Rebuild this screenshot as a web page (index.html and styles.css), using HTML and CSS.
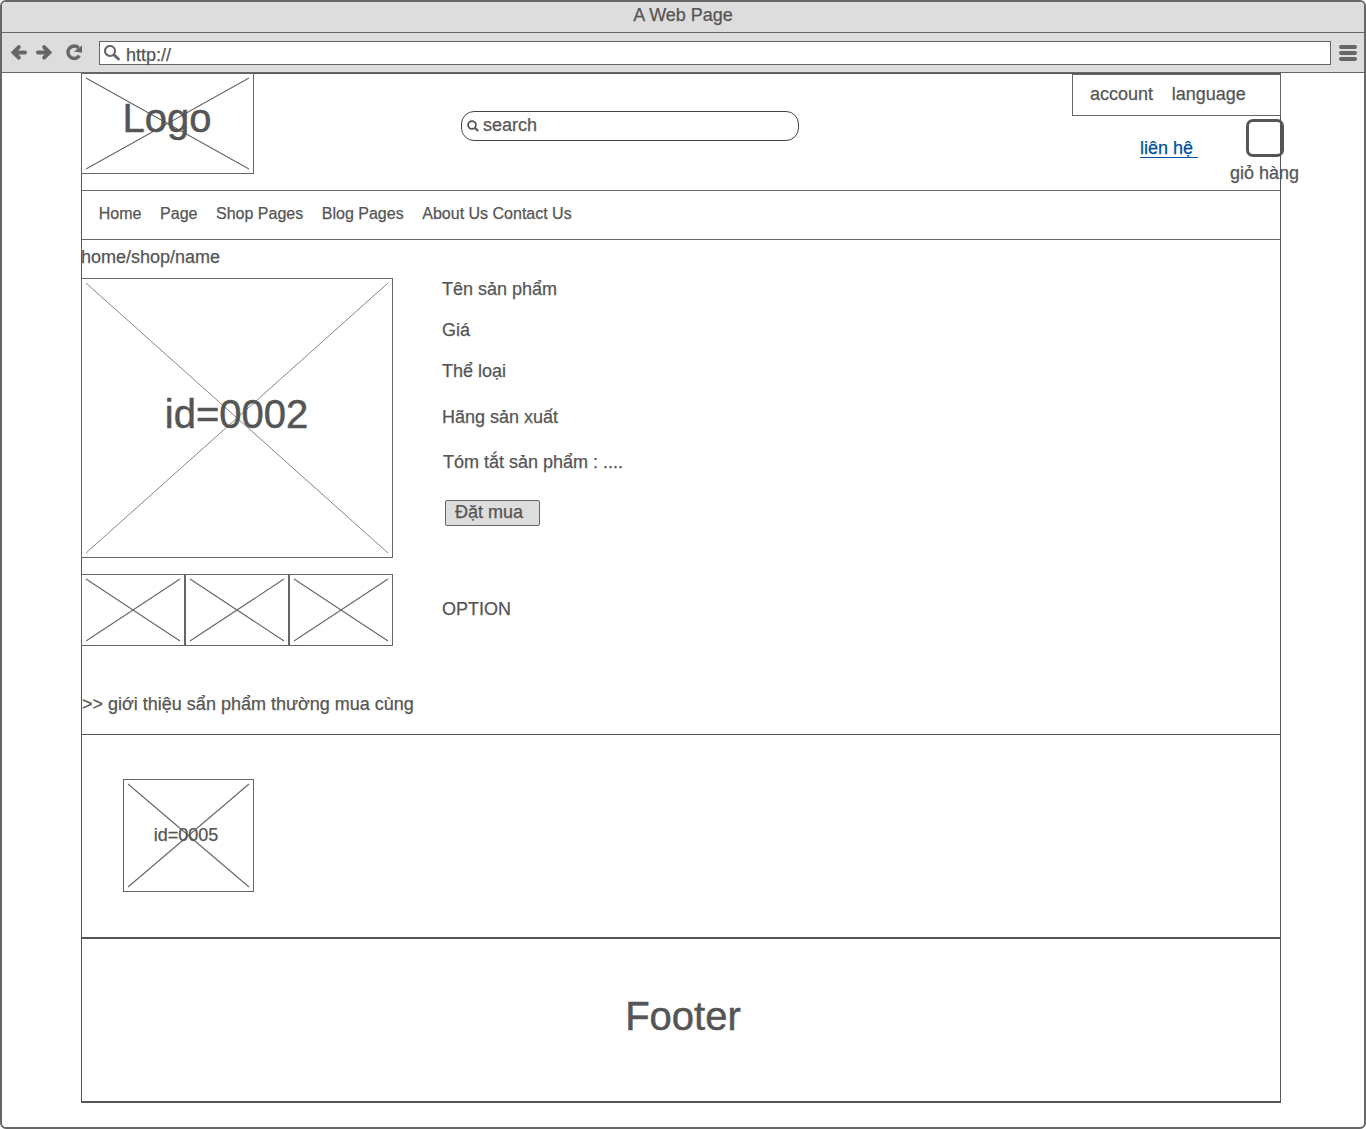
FILE: index.html
```html
<!DOCTYPE html>
<html lang="vi">
<head>
<meta charset="utf-8">
<title>A Web Page</title>
<link rel="stylesheet" href="styles.css">
</head>
<body>
<div class="window">
  <div class="titlebar">A Web Page</div>
  <div class="toolbar">
    <svg class="nav-icons" width="76" height="20" viewBox="0 0 76 20">
      <g fill="none" stroke="#666" stroke-width="4" stroke-linejoin="miter">
        <path d="M9.8 4.2 4.6 9.4l5.2 5.2M5 9.4h11" stroke-linecap="round"/>
        <path d="M35.2 4.2l5.2 5.2-5.2 5.2M40 9.4H29" stroke-linecap="round"/>
        <path d="M69.6 4.9A6.2 6.2 0 1 0 70.4 12.6" stroke-width="3.4"/>
      </g>
      <path d="M73 2.4v7.4l-8-1.4z" fill="#666"/>
    </svg>
    <div class="address">
      <svg width="18" height="18" viewBox="0 0 18 18" fill="none" stroke="#666">
        <circle cx="6" cy="6" r="5" stroke-width="2.1"/>
        <path d="M10.2 10.2l4.2 3.8" stroke-width="3" stroke-linecap="round"/>
      </svg>
      <span>http://</span>
    </div>
    <div class="menu"><i></i><i></i><i></i></div>
  </div>

  <div class="sheet">
    <header class="header">
      <div class="picture logo">
        <svg><line x1="0" y1="0" x2="100%" y2="100%"/><line x1="100%" y1="0" x2="0" y2="100%"/></svg>
        <span class="big">Logo</span>
      </div>
      <div class="search">
        <svg width="12" height="12" viewBox="0 0 12 12" fill="none" stroke="#555">
          <circle cx="5" cy="5" r="3.9" stroke-width="1.8"/>
          <path d="M8 8l3.2 3" stroke-width="2.2"/>
        </svg>
        <span>search</span>
      </div>
      <div class="tools">
        <div class="account"><span>account</span><span>language</span></div>
        <div class="tools-row">
          <a class="contact">liên hệ</a>
          <div class="cart"><i class="cart-box"></i><span>giỏ hàng</span></div>
        </div>
      </div>
    </header>

    <nav class="nav">
      <span>Home</span><span>Page</span><span>Shop Pages</span><span>Blog Pages</span><span>About Us Contact Us</span>
    </nav>

    <main class="product">
      <div class="crumbs">home/shop/name</div>
      <div class="columns">
        <div class="gallery">
          <div class="picture main-picture">
            <svg><line x1="0" y1="0" x2="100%" y2="100%"/><line x1="100%" y1="0" x2="0" y2="100%"/></svg>
            <span class="big">id=0002</span>
          </div>
          <div class="thumbs">
            <div class="picture"><svg><line x1="0" y1="0" x2="100%" y2="100%"/><line x1="100%" y1="0" x2="0" y2="100%"/></svg></div>
            <div class="picture"><svg><line x1="0" y1="0" x2="100%" y2="100%"/><line x1="100%" y1="0" x2="0" y2="100%"/></svg></div>
            <div class="picture"><svg><line x1="0" y1="0" x2="100%" y2="100%"/><line x1="100%" y1="0" x2="0" y2="100%"/></svg></div>
          </div>
        </div>
        <div class="details">
          <div class="name">Tên sản phẩm</div>
          <div class="price">Giá</div>
          <div class="category">Thể loại</div>
          <div class="maker">Hãng sản xuất</div>
          <div class="summary">Tóm tắt sản phẩm : ....</div>
          <div class="order">Đặt mua</div>
          <div>OPTION</div>
        </div>
      </div>
      <div class="related-title">&gt;&gt; giới thiệu sẩn phẩm thường mua cùng</div>
    </main>

    <section class="related">
      <div class="picture related-picture">
        <svg><line x1="0" y1="0" x2="100%" y2="100%"/><line x1="100%" y1="0" x2="0" y2="100%"/></svg>
        <span>id=0005</span>
      </div>
    </section>

    <footer class="footer big">Footer</footer>
  </div>
</div>
</body>
</html>
```
FILE: styles.css
```css
* { box-sizing: border-box; }

body {
  margin: 0;
  background: #fff;
  color: #555;
  font: 18px/20px "Liberation Sans", Arial, sans-serif;
  -webkit-text-stroke: 0.25px currentColor;
}

svg { display: block; }

.big { font-size: 40px; line-height: 46px; -webkit-text-stroke-width: 0.5px; }

.window {
  height: 1129px;
  border: 2px solid #666;
  border-radius: 6px;
  overflow: hidden;
}

/* browser frame */
.titlebar {
  height: 31px;
  padding-top: 3px;
  border-bottom: 1px solid #666;
  background: #ddd;
  text-align: center;
}

.toolbar {
  display: flex;
  height: 40px;
  padding: 8px 7px 0 7px;
  border-bottom: 1px solid #666;
  background: #ddd;
}

.nav-icons { margin-top: 2px; }

.address {
  display: flex;
  gap: 4px;
  width: 1232px;
  height: 24px;
  margin-left: 14px;
  padding: 3px 0 0 4px;
  border: 1px solid #666;
  background: #fff;
}

.menu {
  display: flex;
  flex-direction: column;
  gap: 2px;
  width: 18px;
  margin: 4px 0 0 7.5px;
}

.menu i { height: 4px; border-radius: 2px; background: #666; }

/* page */
.sheet {
  width: 1200px;
  height: 1030px;
  margin-left: 79px;
  border: 1px solid #555;
  border-bottom-width: 2px;
}

.picture {
  display: grid;
  grid-template-rows: minmax(0, 1fr);
  justify-items: center;
  align-items: start;
  padding: 4px;
  border: 1px solid #666;
}

.picture > * { grid-area: 1 / 1; }

.picture svg {
  width: 100%;
  height: 100%;
  overflow: visible;
  stroke: #666;
  stroke-width: 1.1;
}

.header {
  display: flex;
  height: 117px;
  border-bottom: 1px solid #666;
}

.logo {
  width: 173px;
  height: 101px;
  margin: -1px 0 0 -1px;
}

.logo span { margin: 17px 1px 0 0; }

.search {
  display: flex;
  gap: 4px;
  width: 338px;
  height: 30px;
  margin: 37px 0 0 207px;
  padding: 3px 0 0 5px;
  border: 1px solid #444;
  border-radius: 13px;
}

.search svg { margin-top: 5px; }

.tools { width: 209px; margin: 0 -1px 0 273px; }

.account {
  display: flex;
  gap: 18.6px;
  height: 42px;
  padding: 9px 0 0 17px;
  border: 1px solid #666;
}

.tools-row { display: flex; padding-left: 68px; }

.contact {
  flex: none;
  width: 58px;
  height: 20px;
  margin-top: 22px;
  border-bottom: 1px solid #00509d;
  color: #00509d;
}

.cart {
  display: flex;
  flex: none;
  flex-direction: column;
  align-items: center;
  gap: 6px;
  width: 70px;
  margin: 3px 0 0 32px;
  white-space: nowrap;
}

.cart-box {
  width: 38px;
  height: 38px;
  border: 3px solid #555;
  border-radius: 7px;
}

.cart span { margin-right: 1px; }

.nav {
  display: flex;
  gap: 18.6px;
  height: 49px;
  padding: 13px 0 0 16.8px;
  border-bottom: 1px solid #666;
  font-size: 16px;
}

.product { height: 495px; padding-top: 7px; border-bottom: 1px solid #555; }

.crumbs { margin: 0 0 11px -1px; }

.columns { display: flex; gap: 49px; height: 368px; }

.gallery { width: 312px; margin-left: -1px; }

.main-picture { height: 280px; }
.main-picture svg { stroke-width: 0.8; }
.main-picture span { margin: 108px 1px 0 0; }

.thumbs {
  display: grid;
  grid-template-columns: repeat(3, 104px);
  grid-auto-rows: 72px;
  margin-top: 16px;
}

.details { padding-top: 1px; }

.name, .price { margin-bottom: 21px; }
.category { margin-bottom: 26px; }
.maker { margin-bottom: 25px; }
.summary { margin: 0 0 28px 1px; }

.order {
  width: 95px;
  height: 26px;
  margin: 0 0 73px 3px;
  padding: 1px 0 0 9px;
  border: 1px solid #666;
  border-radius: 2px;
  background: #ddd;
}

.related-title { margin-top: 48px; }

.related {
  height: 204px;
  padding: 44px 0 0 41px;
  border-bottom: 2px solid #555;
}

.related-picture { width: 131px; height: 113px; }
.related-picture span { margin: 41px 5px 0 0; }

.footer { padding: 54px 0 0 4px; text-align: center; }
```
